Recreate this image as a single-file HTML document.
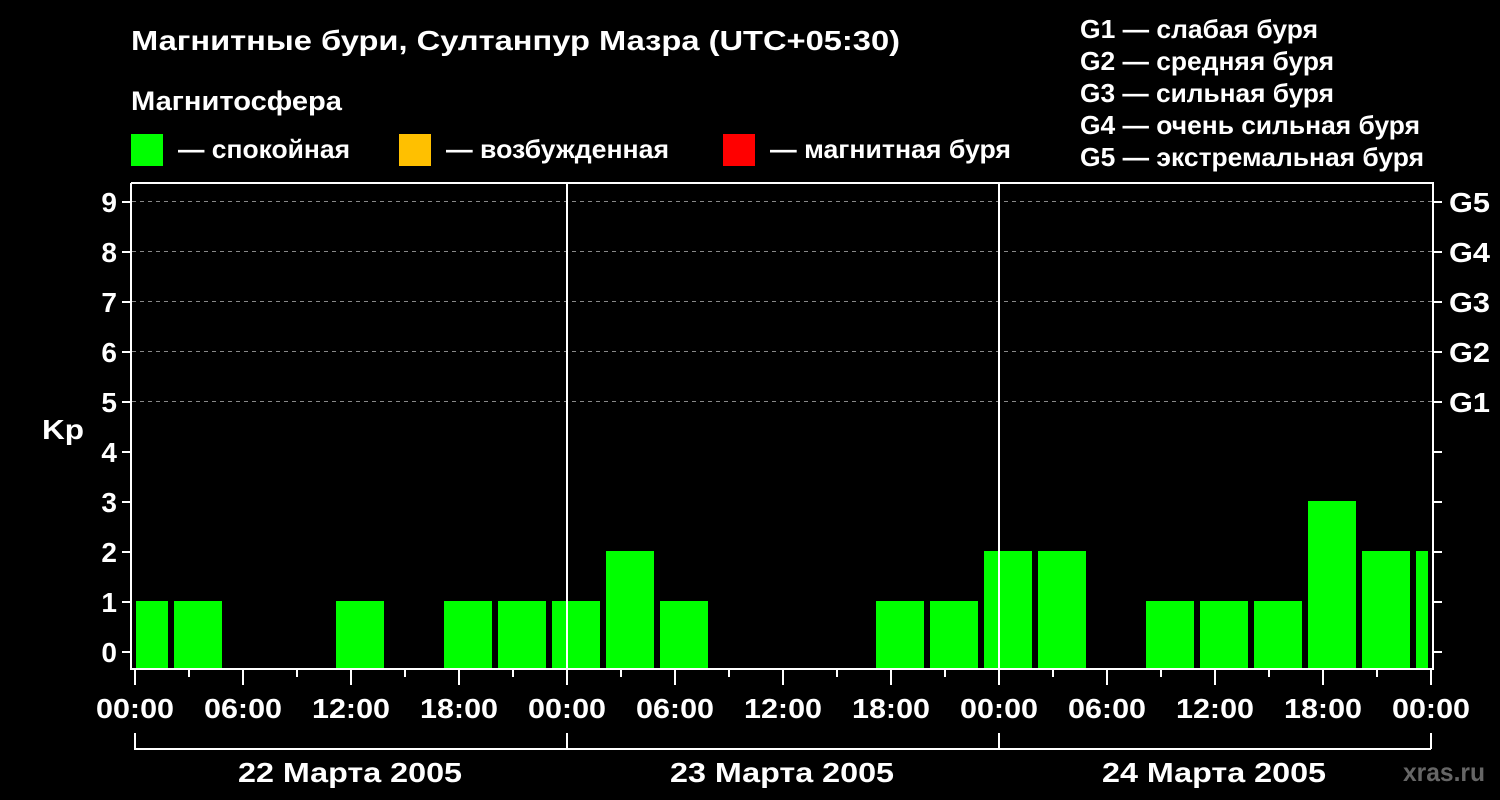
<!DOCTYPE html>
<html><head><meta charset="utf-8"><style>
html,body{margin:0;padding:0;background:#000;}
svg{display:block}
text{font-family:"Liberation Sans",sans-serif;font-weight:bold;fill:#fff}
</style></head><body>
<svg width="1500" height="800" viewBox="0 0 1500 800" xmlns="http://www.w3.org/2000/svg">
<rect width="1500" height="800" fill="#000"/>
<text x="131" y="50" font-size="28" textLength="769" lengthAdjust="spacingAndGlyphs">Магнитные бури, Султанпур Мазра (UTC+05:30)</text>
<text x="131" y="110" font-size="27" textLength="211" lengthAdjust="spacingAndGlyphs">Магнитосфера</text>
<rect x="131" y="134" width="32" height="32" fill="#00ff00"/>
<text x="178" y="158" font-size="26" textLength="172" lengthAdjust="spacingAndGlyphs">— спокойная</text>
<rect x="399" y="134" width="32" height="32" fill="#ffc000"/>
<text x="446" y="158" font-size="26" textLength="223" lengthAdjust="spacingAndGlyphs">— возбужденная</text>
<rect x="723" y="134" width="32" height="32" fill="#ff0000"/>
<text x="770" y="158" font-size="26" textLength="241" lengthAdjust="spacingAndGlyphs">— магнитная буря</text>
<g font-size="26">
<text x="1080" y="38" textLength="238" lengthAdjust="spacingAndGlyphs">G1 — слабая буря</text>
<text x="1080" y="70" textLength="254" lengthAdjust="spacingAndGlyphs">G2 — средняя буря</text>
<text x="1080" y="102" textLength="254" lengthAdjust="spacingAndGlyphs">G3 — сильная буря</text>
<text x="1080" y="134" textLength="340" lengthAdjust="spacingAndGlyphs">G4 — очень сильная буря</text>
<text x="1080" y="166" textLength="344" lengthAdjust="spacingAndGlyphs">G5 — экстремальная буря</text>
</g>
<g stroke="#888" stroke-width="1" stroke-dasharray="4,4">
<line x1="132" y1="201.5" x2="1432" y2="201.5"/>
<line x1="132" y1="251.5" x2="1432" y2="251.5"/>
<line x1="132" y1="301.5" x2="1432" y2="301.5"/>
<line x1="132" y1="351.5" x2="1432" y2="351.5"/>
<line x1="132" y1="401.5" x2="1432" y2="401.5"/>
</g>
<g fill="#00ff00">
<rect x="136" y="601" width="32" height="67"/>
<rect x="174" y="601" width="48" height="67"/>
<rect x="336" y="601" width="48" height="67"/>
<rect x="444" y="601" width="48" height="67"/>
<rect x="498" y="601" width="48" height="67"/>
<rect x="552" y="601" width="48" height="67"/>
<rect x="606" y="551" width="48" height="117"/>
<rect x="660" y="601" width="48" height="67"/>
<rect x="876" y="601" width="48" height="67"/>
<rect x="930" y="601" width="48" height="67"/>
<rect x="984" y="551" width="48" height="117"/>
<rect x="1038" y="551" width="48" height="117"/>
<rect x="1146" y="601" width="48" height="67"/>
<rect x="1200" y="601" width="48" height="67"/>
<rect x="1254" y="601" width="48" height="67"/>
<rect x="1308" y="501" width="48" height="167"/>
<rect x="1362" y="551" width="48" height="117"/>
<rect x="1416" y="551" width="12" height="117"/>
</g>
<g stroke="#fff" stroke-width="2" fill="none">
<path d="M131 183V669H1433V183H131"/>
<line x1="567" y1="183" x2="567" y2="668"/>
<line x1="999" y1="183" x2="999" y2="668"/>
<path d="M122 202h9M122 252h9M122 302h9M122 352h9M122 402h9M122 452h9M122 502h9M122 552h9M122 602h9M122 652h9"/>
<path d="M1433 202h9M1433 252h9M1433 302h9M1433 352h9M1433 402h9M1433 452h9M1433 502h9M1433 552h9M1433 602h9M1433 652h9"/>
<path d="M135 669v16M567 669v16M999 669v16M1431 669v16"/>
<path d="M189 669v8M243 669v16M297 669v8M351 669v16M405 669v8M459 669v16M513 669v8
M621 669v8M675 669v16M729 669v8M783 669v16M837 669v8M891 669v16M945 669v8
M1053 669v8M1107 669v16M1161 669v8M1215 669v16M1269 669v8M1323 669v16M1377 669v8"/>
<path d="M135 733v16H1431M567 733v16M999 733v16M1431 733v16"/>
</g>
<g font-size="28" text-anchor="end">
<text x="117" y="212">9</text><text x="117" y="262">8</text><text x="117" y="312">7</text>
<text x="117" y="362">6</text><text x="117" y="412">5</text><text x="117" y="462">4</text>
<text x="117" y="512">3</text><text x="117" y="562">2</text><text x="117" y="612">1</text>
<text x="117" y="662">0</text>
</g>
<g font-size="28">
<text x="1449" y="212" textLength="41" lengthAdjust="spacingAndGlyphs">G5</text><text x="1449" y="262" textLength="41" lengthAdjust="spacingAndGlyphs">G4</text><text x="1449" y="312" textLength="41" lengthAdjust="spacingAndGlyphs">G3</text>
<text x="1449" y="362" textLength="41" lengthAdjust="spacingAndGlyphs">G2</text><text x="1449" y="412" textLength="41" lengthAdjust="spacingAndGlyphs">G1</text>
</g>
<text x="42" y="439" font-size="28" textLength="42" lengthAdjust="spacingAndGlyphs">Kp</text>
<g font-size="28">
<text x="96" y="718" textLength="78" lengthAdjust="spacingAndGlyphs">00:00</text>
<text x="204" y="718" textLength="78" lengthAdjust="spacingAndGlyphs">06:00</text>
<text x="312" y="718" textLength="78" lengthAdjust="spacingAndGlyphs">12:00</text>
<text x="420" y="718" textLength="78" lengthAdjust="spacingAndGlyphs">18:00</text>
<text x="528" y="718" textLength="78" lengthAdjust="spacingAndGlyphs">00:00</text>
<text x="636" y="718" textLength="78" lengthAdjust="spacingAndGlyphs">06:00</text>
<text x="744" y="718" textLength="78" lengthAdjust="spacingAndGlyphs">12:00</text>
<text x="852" y="718" textLength="78" lengthAdjust="spacingAndGlyphs">18:00</text>
<text x="960" y="718" textLength="78" lengthAdjust="spacingAndGlyphs">00:00</text>
<text x="1068" y="718" textLength="78" lengthAdjust="spacingAndGlyphs">06:00</text>
<text x="1176" y="718" textLength="78" lengthAdjust="spacingAndGlyphs">12:00</text>
<text x="1284" y="718" textLength="78" lengthAdjust="spacingAndGlyphs">18:00</text>
<text x="1392" y="718" textLength="78" lengthAdjust="spacingAndGlyphs">00:00</text>
<text x="238" y="782" textLength="224" lengthAdjust="spacingAndGlyphs">22 Марта 2005</text>
<text x="670" y="782" textLength="224" lengthAdjust="spacingAndGlyphs">23 Марта 2005</text>
<text x="1102" y="782" textLength="224" lengthAdjust="spacingAndGlyphs">24 Марта 2005</text>
</g>
<text x="1403" y="781" font-size="26" textLength="82" lengthAdjust="spacingAndGlyphs" style="fill:#666">xras.ru</text>
</svg>
</body></html>
